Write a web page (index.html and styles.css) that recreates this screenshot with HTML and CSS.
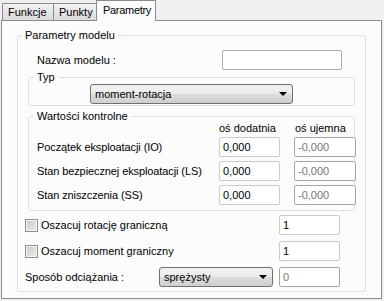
FILE: index.html
```html
<!DOCTYPE html>
<html lang="pl">
<head>
    <meta charset="UTF-8">
    <title>Parametry</title>
    <link rel="stylesheet" href="styles.css">
</head>
<body>

    <!-- Tabs -->
    <div class="tabs">
        <div class="tab first">Funkcje</div>
        <div class="tab">Punkty</div>
        <div class="tab active">Parametry</div>
    </div>

    <!-- Tab page -->
    <div class="page">
        <fieldset class="group main">
            <legend>Parametry modelu</legend>

            <div class="row name-row">
                <span class="name-label">Nazwa modelu :</span>
                <input type="text" class="box name-box">
            </div>

            <fieldset class="group sub type-group">
                <legend>Typ</legend>
                <div class="combo type-combo">moment-rotacja<span class="arrow"></span></div>
            </fieldset>

            <fieldset class="group sub values">
                <legend>Wartości kontrolne</legend>
                <div class="grid">
                    <span></span>
                    <span class="head">oś dodatnia</span>
                    <span class="head neg">oś ujemna</span>

                    <span class="label">Początek eksploatacji (IO)</span>
                    <input type="text" class="box" value="0,000">
                    <input type="text" class="box neg" value="-0,000" disabled>

                    <span class="label">Stan bezpiecznej eksploatacji (LS)</span>
                    <input type="text" class="box" value="0,000">
                    <input type="text" class="box neg" value="-0,000" disabled>

                    <span class="label">Stan zniszczenia (SS)</span>
                    <input type="text" class="box" value="0,000">
                    <input type="text" class="box neg" value="-0,000" disabled>
                </div>
            </fieldset>

            <div class="row check-row">
                <label class="check"><input type="checkbox"><span>Oszacuj rotację graniczną</span></label>
                <input type="text" class="box small" value="1">
            </div>

            <div class="row check-row">
                <label class="check"><input type="checkbox"><span>Oszacuj moment graniczny</span></label>
                <input type="text" class="box small" value="1">
            </div>

            <div class="row load-row">
                <span class="load-label">Sposób odciążania :</span>
                <div class="combo load-combo">sprężysty<span class="arrow"></span></div>
                <input type="text" class="box small" value="0" disabled>
            </div>
        </fieldset>
    </div>

</body>
</html>
```

FILE: styles.css
```css
body {
    margin: 0;
    width: 384px;
    height: 301px;
    overflow: hidden;
    background: #f0f0f0;
    font-family: 'Liberation Sans', Arial, sans-serif;
    font-size: 11px;
    line-height: 13px;
    color: #000;
    white-space: nowrap;
}

/* Tabs */
.tabs {
    display: flex;
    align-items: flex-end;
    height: 20px;
    padding-left: 2px;
}

.tab {
    box-sizing: border-box;
    height: 17px;
    padding: 2px 0 0 5px;
    border: 1px solid #898c95;
    border-bottom: none;
    background: linear-gradient(#f3f3f3, #e5e5e5 50%, #dcdcdc);
}

.tab.first {
    width: 52px;
}

.tab:nth-child(2) {
    width: 44px;
    margin-left: -1px;
}

.tab.active {
    position: relative;
    z-index: 1;
    width: 60px;
    height: 21px;
    margin-left: -1px;
    margin-bottom: -1px;
    padding: 3px 0 0 6px;
    letter-spacing: -0.3px;
    background: #fcfcfc;
}

/* Tab page */
.page {
    box-sizing: border-box;
    width: 381px;
    height: 279px;
    margin-left: 1px;
    padding: 8px 15px 0;
    border: 1px solid #898c95;
    background: #fcfcfc;
}

.group {
    margin: 0;
    border: 1px solid #d5dfe5;
    border-radius: 3px;
    min-width: 0;
}

.group legend {
    padding: 0 3px;
    line-height: 13px;
}

.main {
    padding: 0 10px 4px 7px;
}

.main > legend {
    margin-left: -3px;
}

.sub {
    margin-left: 3px;
    padding: 0 0 1px 8px;
}

.sub > legend {
    margin-left: -4px;
    padding: 0 4px;
}

.row {
    display: flex;
    align-items: center;
    height: 20px;
}

.name-row {
    margin-top: 8px;
    margin-bottom: 1px;
}

.name-label {
    margin-left: 12px;
}

.box {
    box-sizing: border-box;
    height: 20px;
    width: 61px;
    margin: 0;
    padding: 0 3px;
    border: 1px solid #c9cbcf;
    border-radius: 2px;
    background: #fff;
    font: inherit;
    color: #000;
    outline: none;
}

.box:disabled {
    border-color: #a4a4a4;
    color: #777;
}

.name-box {
    width: 120px;
    margin-left: auto;
    margin-right: 13px;
    border-color: #a9a9a9;
}

.small {
    margin-left: auto;
    margin-right: 15px;
}

/* Combo boxes */
.combo {
    position: relative;
    box-sizing: border-box;
    height: 20px;
    padding: 3px 0 0 4px;
    border: 1px solid #707070;
    border-radius: 3px;
    background: linear-gradient(#f2f2f2, #ebebeb 50%, #dddddd 50%, #cfcfcf);
}

.arrow {
    position: absolute;
    right: 5px;
    top: 7px;
    border-left: 4px solid transparent;
    border-right: 4px solid transparent;
    border-top: 4px solid #000;
}

.type-combo {
    width: 203px;
    margin-left: 53px;
}

.values {
    margin-top: 4px;
    padding-bottom: 5px;
}

.grid {
    display: grid;
    grid-template-columns: 168px 61px 62px;
    column-gap: 14px;
    row-gap: 4px;
    align-items: center;
}

.grid .label {
    letter-spacing: -0.1px;
}

.grid .head {
    line-height: 11px;
    margin-bottom: -1px;
}

.grid .head.neg {
    margin-left: 1px;
}

.grid .box.neg {
    width: 62px;
}

.check-row {
    margin-top: 6px;
}

.values + .check-row {
    margin-top: 4px;
}

.check {
    display: flex;
    align-items: center;
}

.check input {
    appearance: none;
    box-sizing: border-box;
    width: 13px;
    height: 13px;
    margin: 0 3px 0 0;
    border: 1px solid #8e8f8f;
    background: linear-gradient(135deg, #c9c9c9, #ececec);
    box-shadow: inset 0 0 0 1px #f4f4f4;
}

.load-row {
    margin-top: 6px;
}

.load-label {
    width: 134px;
}

.load-combo {
    width: 114px;
}

.load-row .small {
    margin-left: 6px;
}
```
